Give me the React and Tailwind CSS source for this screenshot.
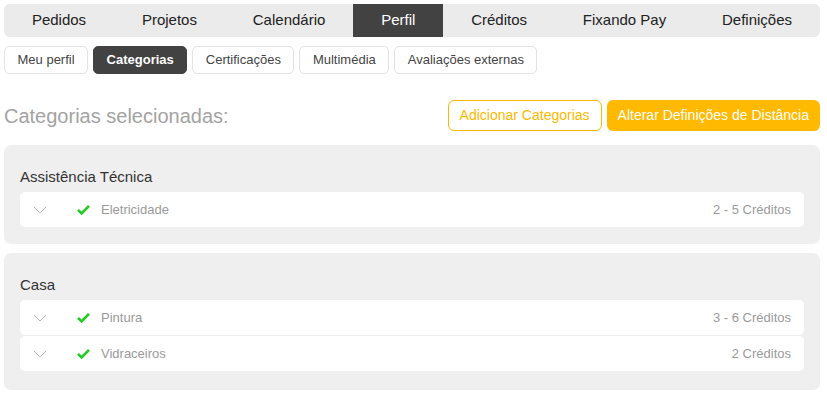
import React from "react";

const NAV = ["Pedidos", "Projetos", "Calendário", "Perfil", "Créditos", "Fixando Pay", "Definições"];
const SUBTABS = ["Meu perfil", "Categorias", "Certificações", "Multimédia", "Avaliações externas"];

const GROUPS = [
  { title: "Assistência Técnica", items: [{ name: "Eletricidade", credits: "2 - 5 Créditos" }] },
  {
    title: "Casa",
    items: [
      { name: "Pintura", credits: "3 - 6 Créditos" },
      { name: "Vidraceiros", credits: "2 Créditos" },
    ],
  },
];

function Chevron() {
  return (
    <svg width="14" height="8" viewBox="0 0 14 8" fill="none">
      <path d="M1 1l6 6 6-6" stroke="#b5b5b5" strokeWidth="1" />
    </svg>
  );
}

function Check() {
  return (
    <svg width="13" height="11" viewBox="0 0 13 11">
      <path d="M1 5.8l3.6 3.6L12 1.8" stroke="#1fcc1f" strokeWidth="2.6" fill="none" strokeLinejoin="miter" />
    </svg>
  );
}

export default function App() {
  return (
    <div className="w-[827px] h-[395px] bg-white pl-1 pr-[7px] pt-1 font-['Liberation_Sans',Arial,sans-serif] overflow-hidden">
      <div className="flex h-[33px] bg-[#ebebeb] rounded-[6px] overflow-hidden">
        {NAV.map((n) => (
          <div
            key={n}
            className={`flex-auto flex items-center justify-center text-[15px] ${
              n === "Perfil" ? "bg-[#424242] text-white" : "text-[#222]"
            }`}
          >
            {n}
          </div>
        ))}
      </div>

      <div className="flex gap-[5px] mt-[9px]">
        {SUBTABS.map((s) => (
          <div
            key={s}
            className={`h-[28px] px-[12.5px] flex items-center rounded-[5px] text-[13px] ${
              s === "Categorias"
                ? "bg-[#424242] text-white font-bold border border-[#424242]"
                : "bg-white text-[#444] border border-[#e3e3e3]"
            }`}
          >
            {s}
          </div>
        ))}
      </div>

      <div className="flex items-center justify-between mt-[26px]">
        <h2 className="text-[20px] text-[#a3a3a3]">Categorias selecionadas:</h2>
        <div className="flex gap-[5px]">
          <button className="h-[31px] px-[11px] rounded-[6px] border border-[#fbb900] text-[#fbb900] text-[14px] bg-white">
            Adicionar Categorias
          </button>
          <button className="h-[31px] px-[11px] rounded-[6px] bg-[#ffb900] text-white text-[14px]">
            Alterar Definições de Distância
          </button>
        </div>
      </div>

      <div className="flex flex-col gap-[9px] mt-[14px]">
        {GROUPS.map((g) => (
          <div key={g.title} className="bg-[#efefef] rounded-[7px] px-4 pt-[22px] pb-[17px] last:pb-[19px]">
            <div className="text-[15px] leading-[20px] text-[#333] mb-[5px]">{g.title}</div>
            <div className="flex flex-col gap-px">
              {g.items.map((it) => (
                <div key={it.name} className="h-[35px] bg-white rounded-[5px] flex items-center pl-[13px] pr-[13px] text-[13px]">
                  <Chevron />
                  <span className="ml-[30px] flex items-center">
                    <Check />
                  </span>
                  <span className="ml-[11px] text-[#9a9a9a]">{it.name}</span>
                  <span className="ml-auto text-[#9a9a9a]">{it.credits}</span>
                </div>
              ))}
            </div>
          </div>
        ))}
      </div>
    </div>
  );
}
